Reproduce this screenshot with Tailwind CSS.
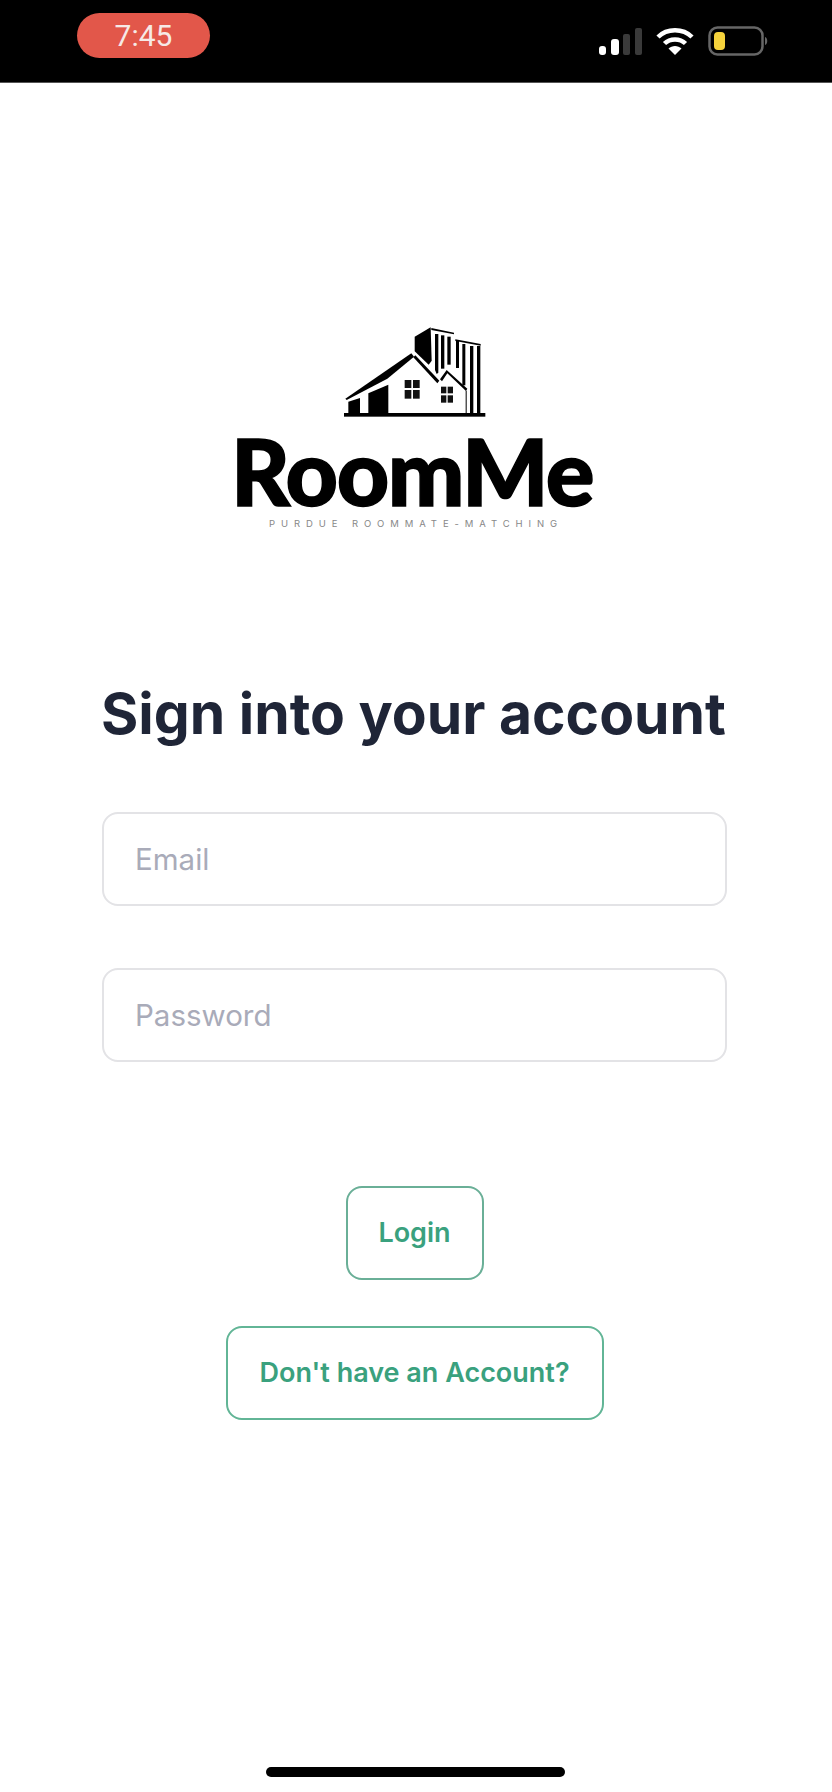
<!doctype html>
<html lang="en">
<head>
<meta charset="utf-8">
<script src="https://cdn.jsdelivr.net/npm/@tailwindcss/browser@4"></script>
<title>RoomMe</title>
</head>
<body class="bg-white">
<div class="relative w-[832px] h-[1792px] overflow-hidden flex flex-col bg-white font-['Inter',sans-serif] [font-optical-sizing:none]">
  <header class="h-[83px] shrink-0 bg-black flex items-start justify-between pl-[77px] pr-[63px] border-b border-[#555]">
    <div class="mt-[13px] w-[133px] h-[45px] rounded-full bg-[#e2574a] flex items-center justify-center text-[#f6e9e6] text-[30px] font-['Roboto',sans-serif]">7:45</div>
    <div class="mt-[26px] flex items-center gap-[14px]">
      <svg width="43" height="29" viewBox="0 0 43 29" aria-hidden="true">
        <rect x="0" y="19" width="7" height="9" rx="3" fill="#fff"/>
        <rect x="12" y="12" width="8" height="16" rx="3" fill="#fff"/>
        <rect x="24" y="7" width="7" height="21" rx="2" fill="#3a3a3a"/>
        <rect x="36" y="1" width="7" height="27" rx="2" fill="#3a3a3a"/>
      </svg>
      <svg width="38" height="29" viewBox="0 0 38 29" aria-hidden="true" fill="none" stroke="#fff" stroke-width="4.5">
        <path d="M2 10 C11 1 27 1 36 10"/>
        <path d="M8.5 16.5 C14 11 24 11 29.5 16.5"/>
        <path d="M19 28 L12.5 21.5 C16 18 22 18 25.5 21.5 Z" fill="#fff" stroke="none"/>
      </svg>
      <svg width="61" height="30" viewBox="0 0 61 30" aria-hidden="true">
        <rect x="1.5" y="1.5" width="53" height="27" rx="8" fill="none" stroke="#666" stroke-width="2.5"/>
        <rect x="6" y="6" width="11" height="18" rx="4" fill="#f6d33c"/>
        <path d="M57 11 C60 12 60 18 57 19 Z" fill="#666"/>
      </svg>
    </div>
  </header>

  <main class="flex-1 flex flex-col items-center">
    <svg class="mt-[237px] ml-[-2px] block" width="170" height="100" viewBox="0 0 510 300" aria-hidden="true">
      <rect x="42" y="279" width="424" height="11" fill="#000"/>
      <path d="M46 236 L244 100 L252 110 L172 176 L50 240 Z" fill="#000"/>
      <path d="M55 245 L90 234 V280 H55 Z" fill="#000"/>
      <path d="M115 220 L175 194 V280 H115 Z" fill="#000"/>
      <path d="M250 112 L256 106 L328 182 L322 190 Z" fill="#000"/>
      <path d="M330 178 L350 150 L412 206 L408 213 L352 160 L336 184 Z" fill="#000"/>
      <rect x="407" y="212" width="3" height="68" fill="#000"/>
      <path d="M254 50 L302 22 L305 122 L296 134 L254 94 Z" fill="#000"/>
      <path d="M304 24 L372 38 L372 43 L304 30 Z" fill="#000"/>
      <path d="M315 42 H325 V158 L320 162 L315 150 Z" fill="#000"/>
      <rect x="333" y="46" width="10" height="100" fill="#000"/>
      <rect x="352" y="50" width="10" height="84" fill="#000"/>
      <path d="M376 58 L452 72 L452 77 L376 63 Z" fill="#000"/>
      <rect x="378" y="62" width="9" height="82" fill="#000"/>
      <rect x="397" y="72" width="9" height="124" fill="#000"/>
      <rect x="420" y="78" width="10" height="202" fill="#000"/>
      <rect x="441" y="78" width="10" height="202" fill="#000"/>
      <g fill="#111">
        <rect x="224" y="180" width="20" height="24"/><rect x="249" y="180" width="20" height="24"/>
        <rect x="224" y="210" width="20" height="26"/><rect x="249" y="210" width="20" height="26"/>
        <rect x="333" y="200" width="16" height="20"/><rect x="353" y="200" width="16" height="20"/>
        <rect x="333" y="226" width="16" height="22"/><rect x="353" y="226" width="16" height="22"/>
      </g>
    </svg>
    <h1 class="mt-[7px] ml-[-8px] h-[88px] leading-[88px] text-[91px] font-black text-black tracking-[-1.5px] [-webkit-text-stroke:1.5px_black] font-['Lato',sans-serif]">RoomMe</h1>
    <p class="mt-[3px] h-[12px] leading-[12px] text-[9.5px] font-normal tracking-[5.9px] text-[#888] font-['Inter',sans-serif]">PURDUE ROOMMATE-MATCHING</p>

    <h2 class="mt-[154px] ml-[-5px] h-[60px] leading-[60px] text-[57px] font-bold text-[#1f2537]">Sign into your account</h2>

    <form class="mt-[68px] ml-[-3px] flex flex-col items-center">
      <input type="email" placeholder="Email" class="w-[625px] h-[94px] rounded-[16px] border-2 border-[#e3e3e6] bg-white pl-[31px] text-[29.5px] text-[#1f2537] placeholder:text-[#a9abb9] outline-none">
      <input type="password" placeholder="Password" class="mt-[62px] w-[625px] h-[94px] rounded-[16px] border-2 border-[#e3e3e6] bg-white pl-[31px] text-[29.5px] text-[#1f2537] placeholder:text-[#a9abb9] outline-none">
      <button type="button" class="mt-[124px] w-[138px] h-[94px] rounded-[16px] border-2 border-[#6aaf97] bg-white text-[27px] font-semibold text-[#3aa17e]">Login</button>
      <button type="button" class="mt-[46px] w-[378px] h-[94px] rounded-[16px] border-2 border-[#62b596] bg-white text-[27px] font-semibold text-[#3aa17e]">Don't have an Account?</button>
    </form>
  </main>

  <div class="absolute left-[266px] top-[1767px] w-[299px] h-[10px] rounded-full bg-black"></div>
</div>
</body>
</html>
